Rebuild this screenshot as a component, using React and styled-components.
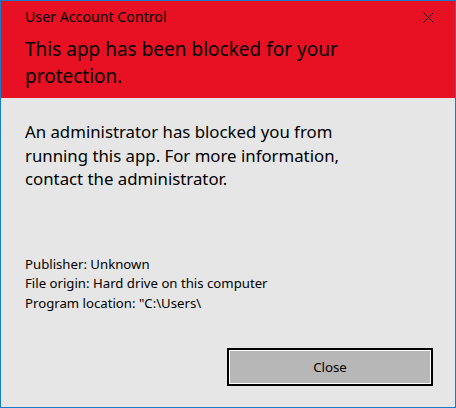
import styled, { createGlobalStyle } from "styled-components";

const GlobalStyle = createGlobalStyle`
  html, body {
    margin: 0;
    padding: 0;
    background: #e6e6e6;
  }
  body {
    font-family: "Segoe UI", "Noto Sans", "Open Sans", sans-serif;
    color: #000;
  }
`;

export default function App() {
  return (
    <>
      <GlobalStyle />
      <Window>
        <Banner>
          <TitleRow>
            <WindowTitle>User Account Control</WindowTitle>
            <CloseGlyph aria-label="Close">
              <svg width="11" height="11" viewBox="0 0 11 11">
                <path d="M0.5 0.5 L10.5 10.5 M10.5 0.5 L0.5 10.5" stroke="#000" strokeWidth="1" />
              </svg>
            </CloseGlyph>
          </TitleRow>
          <Headline>This app has been blocked for your protection.</Headline>
        </Banner>

        <Content>
          <Message>
            An administrator has blocked you from running this app. For more
            information, contact the administrator.
          </Message>

          <Details>
            <DetailLine>Publisher: Unknown</DetailLine>
            <DetailLine>File origin: Hard drive on this computer</DetailLine>
            <DetailLine>Program location: "C:\Users\</DetailLine>
          </Details>
        </Content>

        <Footer>
          <CloseButton type="button">Close</CloseButton>
        </Footer>
      </Window>
    </>
  );
}

const Window = styled.div`
  box-sizing: border-box;
  width: 456px;
  height: 408px;
  border: 1px solid #1979ca;
  background: #e6e6e6;
  display: flex;
  flex-direction: column;
`;

const Banner = styled.div`
  background: #e81123;
  height: 97px;
  box-sizing: border-box;
  padding: 7px 0 0 24px;
`;

const TitleRow = styled.div`
  display: flex;
  align-items: center;
  justify-content: space-between;
  height: 18px;
`;

const WindowTitle = styled.div`
  font-size: 14.2px;
  line-height: 18px;
`;

const CloseGlyph = styled.div`
  width: 46px;
  display: flex;
  justify-content: center;
  align-items: center;
  padding-right: 4px;
`;

const Headline = styled.h1`
  margin: 10px 0 0;
  font-size: 19px;
  font-weight: 400;
  line-height: 27px;
  max-width: 340px;
`;

const Content = styled.div`
  flex: 1;
  padding: 22px 24px 0;
`;

const Message = styled.p`
  margin: 0;
  font-size: 16.8px;
  line-height: 23.5px;
  max-width: 340px;
`;

const Details = styled.div`
  margin-top: 64px;
  display: flex;
  flex-direction: column;
`;

const DetailLine = styled.div`
  font-size: 13.2px;
  line-height: 19.5px;
`;

const Footer = styled.div`
  display: flex;
  justify-content: flex-end;
  padding: 0 22px 21px;
`;

const CloseButton = styled.button`
  width: 206px;
  height: 38px;
  box-sizing: border-box;
  border: 2px solid #000;
  box-shadow: inset 0 0 0 1px #fff;
  background: #b7b7b7;
  font-family: inherit;
  font-size: 13.3px;
  color: #000;
  padding: 0;
`;
